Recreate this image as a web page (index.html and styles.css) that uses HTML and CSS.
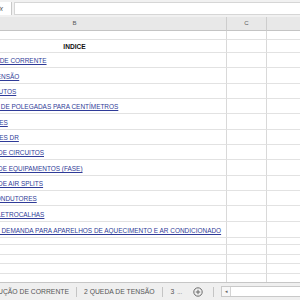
FILE: index.html
```html
<!DOCTYPE html>
<html lang="pt-BR">
<head>
    <meta charset="UTF-8">
    <title>INDICE</title>
    <link rel="stylesheet" href="styles.css">
</head>
<body>
    <div class="app">
        <div class="formula-bar">
            <div class="fx">fx</div>
            <div class="formula-input"></div>
        </div>

        <div class="sheet">
            <div class="grid">
                <div class="row head">
                    <div class="cell">B</div>
                    <div class="cell">C</div>
                    <div class="cell">D</div>
                </div>
                <div class="row short"><div class="cell"></div><div class="cell"></div><div class="cell"></div></div>
                <div class="row title">
                    <div class="cell">INDICE</div><div class="cell"></div><div class="cell"></div>
                </div>
                <div class="row link"><div class="cell"><a href="#">1 - FATOR DE REDUÇÃO DE CORRENTE</a></div><div class="cell"></div><div class="cell"></div></div>
                <div class="row link tall"><div class="cell"><a href="#">2 - TABELA QUEDA DE TENSÃO</a></div><div class="cell"></div><div class="cell"></div></div>
                <div class="row link"><div class="cell"><a href="#">3 - CABOS EM ELETRODUTOS</a></div><div class="cell"></div><div class="cell"></div></div>
                <div class="row link"><div class="cell"><a href="#">4 - TABELA CONVERSÃO DE POLEGADAS PARA CENTÍMETROS</a></div><div class="cell"></div><div class="cell"></div></div>
                <div class="row link tall"><div class="cell"><a href="#">5 - TABELAS DISJUNTORES</a></div><div class="cell"></div><div class="cell"></div></div>
                <div class="row link"><div class="cell"><a href="#">6 - TABELAS DISJUNTORES DR</a></div><div class="cell"></div><div class="cell"></div></div>
                <div class="row link"><div class="cell"><a href="#">7 - DIMENSIONAMENTO DE CIRCUITOS</a></div><div class="cell"></div><div class="cell"></div></div>
                <div class="row link tall"><div class="cell"><a href="#">8 - DIMENSIONAMENTO DE EQUIPAMENTOS (FASE)</a></div><div class="cell"></div><div class="cell"></div></div>
                <div class="row link"><div class="cell"><a href="#">9 - DIMENSIONAMENTO DE AIR SPLITS</a></div><div class="cell"></div><div class="cell"></div></div>
                <div class="row link"><div class="cell"><a href="#">10 - SEÇÃO NOMINAL CONDUTORES</a></div><div class="cell"></div><div class="cell"></div></div>
                <div class="row link tall"><div class="cell"><a href="#">11 – ELETRODUTOS E ELETROCALHAS</a></div><div class="cell"></div><div class="cell"></div></div>
                <div class="row link tall"><div class="cell"><a href="#">12 - CÁLCULO FATOR DE DEMANDA PARA APARELHOS DE AQUECIMENTO E AR CONDICIONADO</a></div><div class="cell"></div><div class="cell"></div></div>
                <div class="row blank r7"><div class="cell"></div><div class="cell"></div><div class="cell"></div></div>
                <div class="row blank"><div class="cell"></div><div class="cell"></div><div class="cell"></div></div>
                <div class="row blank r9"><div class="cell"></div><div class="cell"></div><div class="cell"></div></div>
                <div class="row blank"><div class="cell"></div><div class="cell"></div><div class="cell"></div></div>
                <div class="row blank"><div class="cell"></div><div class="cell"></div><div class="cell"></div></div>
            </div>
        </div>

        <div class="tabs">
            <div class="tab first"><span>1 FATOR DE REDUÇÃO DE CORRENTE</span></div>
            <div class="tab">2 QUEDA DE TENSÃO</div>
            <div class="tab more">3 <span class="dots">...</span></div>
            <div class="add">
                <svg width="10" height="10" viewBox="0 0 10 10">
                    <circle cx="5" cy="5" r="4.2" fill="none" stroke="#6b6b6b" stroke-width="1"/>
                    <path d="M5 2.8v4.4M2.8 5h4.4" stroke="#6b6b6b" stroke-width="1"/>
                </svg>
            </div>
            <div class="scroll">
                <div class="scroll-btn">&#9666;</div>
                <div class="scroll-track"></div>
            </div>
        </div>
    </div>
</body>
</html>
```

FILE: styles.css
```css
body {
    margin: 0;
    font-family: "Liberation Sans", Arial, sans-serif;
    background: #fff;
}
.app {
    width: 300px;
    height: 300px;
    display: flex;
    flex-direction: column;
    overflow: hidden;
}

/* formula bar */
.formula-bar {
    height: 17px;
    box-sizing: border-box;
    padding: 2px 0 2px 0;
    background: #f1f1f1;
    display: flex;
    gap: 2px;
}
.fx {
    width: 12px;
    display: flex;
    justify-content: flex-end;
    align-items: center;
    overflow: hidden;
    padding-right: 8px;
    box-sizing: border-box;
    background: #fff;
    border-right: 1px solid #c9c9c9;
    font-style: italic;
    font-size: 7px;
    color: #555;
}
.formula-input {
    flex: 1;
    background: #fff;
    border: 1px solid #d6d6d6;
    border-right: none;
}

/* sheet grid */
.sheet {
    flex: 1;
    overflow: hidden;
}
.grid {
    margin-left: -77px;
    width: 420px;
}
.row {
    display: grid;
    grid-template-columns: 304px 40px 1fr;
    height: 15px;
}
.row.tall { height: 16px; }
.row.short { height: 9px; }
.row.title { height: 13px; }
.row.blank { height: 10px; }
.row.r7 { height: 7px; }
.row.r9 { height: 9px; }
.cell {
    box-sizing: border-box;
    border-bottom: 1px solid #e2e2e2;
    border-right: 1px solid #d9d9d9;
    overflow: hidden;
    white-space: nowrap;
}
.row.head {
    height: 14px;
    background: #e8e8e8;
}
.row.head .cell {
    border-bottom: 1px solid #c4c4c4;
    border-right: 1px solid #cdcdcd;
    text-align: center;
    font-size: 6px;
    line-height: 13px;
    color: #5a5a5a;
}
.row.title .cell {
    text-align: center;
    font-weight: bold;
    font-size: 6.6px;
    line-height: 13px;
    color: #111;
}
.row.link .cell:first-child {
    display: flex;
    align-items: flex-end;
    padding: 0 0 2px 0;
}
.row.link a {
    font-size: 6.45px;
    line-height: 8px;
    color: #2f3b98;
    text-decoration: underline;
}

/* sheet tabs */
.tabs {
    height: 18px;
    box-sizing: border-box;
    border-top: 1px solid #c6c6c6;
    background: #efefef;
    display: flex;
    align-items: center;
    font-size: 6.8px;
    color: #555;
    white-space: nowrap;
}
.tab {
    padding: 0 7px;
    border-right: 1px solid #c4c4c4;
    line-height: 10px;
}
.tab.first {
    width: 77px;
    box-sizing: border-box;
    padding: 0 7px 0 0;
    display: flex;
    justify-content: flex-end;
    overflow: hidden;
}
.tab.more {
    border-right: none;
    padding: 0 0 0 8px;
}
.dots {
    font-size: 6px;
    margin-left: 1px;
}
.add {
    display: flex;
    padding: 0 10px 0 10px;
    margin-left: 1px;
    border-right: 1px solid #c4c4c4;
    height: 10px;
    align-items: center;
}
.scroll {
    flex: 1;
    display: flex;
    margin-left: 7px;
    height: 9px;
    border: 1px solid #c9c9c9;
    border-right: none;
    background: #fff;
}
.scroll-btn {
    width: 8px;
    border-right: 1px solid #d4d4d4;
    font-size: 5px;
    line-height: 9px;
    text-align: center;
    color: #666;
    background: #f7f7f7;
}
.scroll-track {
    flex: 1;
}
```
